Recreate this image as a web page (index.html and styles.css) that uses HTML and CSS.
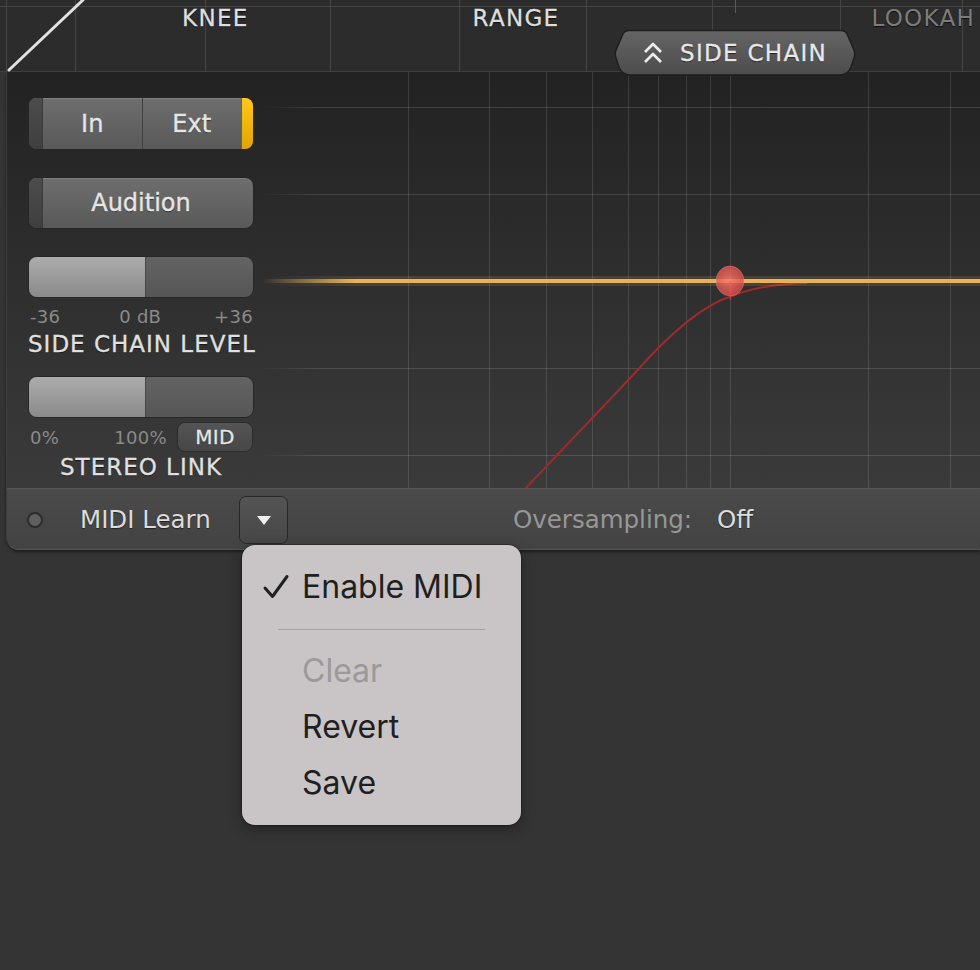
FILE: index.html
```html
<!DOCTYPE html>
<html>
<head>
<meta charset="UTF-8">
<title>Side Chain</title>
<link rel="stylesheet" href="styles.css">
</head>
<body>
	<div class="top">
		<svg class="top_grid" width="980" height="72">
			<line x1="0" y1="6.5" x2="980" y2="6.5" />
			<line x1="6.5" y1="0" x2="6.5" y2="72" />
			<line x1="75.5" y1="0" x2="75.5" y2="72" />
			<line x1="205.5" y1="0" x2="205.5" y2="72" />
			<line x1="330.5" y1="0" x2="330.5" y2="72" />
			<line x1="459.5" y1="0" x2="459.5" y2="72" />
			<line x1="586.5" y1="0" x2="586.5" y2="72" />
			<line x1="712.5" y1="0" x2="712.5" y2="72" />
			<line x1="840.5" y1="0" x2="840.5" y2="72" />
			<line x1="962.5" y1="0" x2="962.5" y2="72" />
			<line class="tick" x1="735.5" y1="0" x2="735.5" y2="13" />
			<line class="diag" x1="9" y1="70" x2="83" y2="0" />
		</svg>
		<div class="labels">
			<span class="lbl knee">KNEE</span>
			<span class="lbl range">RANGE</span>
			<span class="lbl dim">LOOKAH</span>
		</div>
		<div class="sc_tab">
			<svg class="tab_shape" width="242" height="48">
				<defs>
					<linearGradient id="tabg" x1="0" y1="0" x2="0" y2="1">
						<stop offset="0" stop-color="#656565" />
						<stop offset="1" stop-color="#4c4c4c" />
					</linearGradient>
				</defs>
				<path d="M15,1.5 H227 Q231,1.5 233,5 L240,21 Q241.5,24.5 240,29 L237,38 Q234,46 226,46 H16 Q8,46 5,38 L2,29 Q0.5,24.5 2,21 L9,5 Q11,1.5 15,1.5 Z" fill="url(#tabg)" stroke="#1e1e1e" stroke-width="1.5" />
			</svg>
			<svg class="chev" width="22" height="24" viewBox="0 0 22 24">
				<polyline points="3,11 11,3 19,11" />
				<polyline points="3,21 11,13 19,21" />
			</svg>
			<span class="tab_text">SIDE CHAIN</span>
		</div>
	</div>

	<div class="panel">
		<div class="main">
			<div class="controls">
				<div class="btn seg">
					<span class="cap"></span>
					<span class="part sep">In</span>
					<span class="part">Ext</span>
					<span class="led_on"></span>
				</div>
				<div class="btn audition">
					<span class="cap"></span>
					<span class="part">Audition</span>
				</div>
				<div class="slider">
					<span class="fill" style="width: 117px"></span>
				</div>
				<div class="scale">
					<span>-36</span>
					<span class="mid">0 dB</span>
					<span>+36</span>
				</div>
				<div class="title">SIDE CHAIN LEVEL</div>
				<div class="slider second">
					<span class="fill" style="width: 117px"></span>
				</div>
				<div class="scale link">
					<span>0%</span>
					<span class="pct">100%</span>
					<span class="mid_btn">MID</span>
				</div>
				<div class="title small">STEREO LINK</div>
			</div>
			<svg class="graph" width="718" height="416">
				<defs>
					<linearGradient id="hfade" gradientUnits="userSpaceOnUse" x1="0" y1="0" x2="718" y2="0">
						<stop offset="0" stop-color="#ffffff" stop-opacity="0" />
						<stop offset="0.08" stop-color="#ffffff" stop-opacity="0.13" />
						<stop offset="1" stop-color="#ffffff" stop-opacity="0.13" />
					</linearGradient>
					<linearGradient id="ofade" gradientUnits="userSpaceOnUse" x1="0" y1="0" x2="718" y2="0">
						<stop offset="0" stop-color="#e8b25c" stop-opacity="0" />
						<stop offset="0.13" stop-color="#e8b25c" stop-opacity="1" />
						<stop offset="1" stop-color="#e8b25c" stop-opacity="1" />
					</linearGradient>
					<radialGradient id="dotg" cx="0.45" cy="0.45" r="0.6">
						<stop offset="0" stop-color="#ff7a6a" />
						<stop offset="1" stop-color="#d84848" />
					</radialGradient>
				</defs>
				<g class="vgrid">
					<line x1="146.5" y1="0" x2="146.5" y2="416" />
					<line x1="227.5" y1="0" x2="227.5" y2="416" />
					<line x1="284.5" y1="0" x2="284.5" y2="416" />
					<line x1="330.5" y1="0" x2="330.5" y2="416" />
					<line x1="366.5" y1="0" x2="366.5" y2="416" />
					<line x1="396.5" y1="0" x2="396.5" y2="416" />
					<line x1="424.5" y1="0" x2="424.5" y2="416" />
					<line x1="448.5" y1="0" x2="448.5" y2="416" />
					<line x1="468.5" y1="0" x2="468.5" y2="416" />
					<line x1="606.5" y1="0" x2="606.5" y2="416" />
					<line x1="688.5" y1="0" x2="688.5" y2="416" />
				</g>
				<g class="hgrid" stroke="url(#hfade)">
					<line x1="0" y1="35.5" x2="718" y2="35.5" />
					<line x1="0" y1="122.5" x2="718" y2="122.5" />
					<line x1="0" y1="296.5" x2="718" y2="296.5" />
					<line x1="0" y1="383.5" x2="718" y2="383.5" />
				</g>
				<path class="curve" d="M262,418 L372,302 Q430,236 470,224 Q500,212 545,211" />
				<line class="glow" x1="0" y1="209" x2="718" y2="209" stroke="url(#ofade)" />
				<line class="thr" x1="0" y1="209" x2="718" y2="209" stroke="url(#ofade)" />
				<line class="dot_stem" x1="468.5" y1="209" x2="468.5" y2="228" />
				<ellipse class="dot" cx="468" cy="209" rx="14" ry="15" fill="url(#dotg)" />
			</svg>
		</div>
		<div class="bar">
			<span class="led"></span>
			<span class="learn">MIDI Learn</span>
			<span class="drop">
				<svg width="16" height="12" viewBox="0 0 16 12"><polygon points="1,2 15,2 8,11" /></svg>
			</span>
			<span class="os">Oversampling:</span>
			<span class="os_val">Off</span>
		</div>
	</div>

	<div class="menu">
		<div class="item">
			<svg class="check" width="28" height="26" viewBox="0 0 28 26"><path d="M3,14 L10.5,22.5 L25,2.5" /></svg>
			Enable MIDI
		</div>
		<div class="menu_sep"></div>
		<div class="item off">Clear</div>
		<div class="item">Revert</div>
		<div class="item">Save</div>
	</div>
</body>
</html>
```

FILE: styles.css
```css
* {
	box-sizing: border-box;
}

body {
	margin: 0;
	width: 980px;
	height: 970px;
	overflow: hidden;
	position: relative;
	background: #343434;
	font-family: "DejaVu Sans", "Liberation Sans", sans-serif;
}

/* knob strip */
.top {
	position: relative;
	height: 72px;
	background: #2c2c2c;
	border-bottom: 1px solid #3e3e3e;
}

.top_grid {
	position: absolute;
	left: 0;
	top: 0;
}

.top_grid line {
	stroke: #454545;
	stroke-width: 1;
}

.top_grid .tick {
	stroke: #5a5a5a;
}

.top_grid .diag {
	stroke: #e2e2e2;
	stroke-width: 3;
	stroke-linecap: round;
}

.labels {
	position: relative;
	display: flex;
	padding-top: 4px;
	height: 30px;
}

.lbl {
	font-size: 23px;
	line-height: 28px;
	letter-spacing: 1.3px;
	color: #dedede;
	-webkit-text-stroke: 0.3px #dedede;
	text-shadow: 0 1px 1px rgba(0, 0, 0, 0.7);
}

.knee {
	margin-left: 182px;
}

.range {
	margin-left: 224px;
}

.dim {
	margin-left: 312px;
	color: #7c7c7c;
	-webkit-text-stroke: 0;
	white-space: nowrap;
}

.sc_tab {
	position: absolute;
	left: 614px;
	top: 29px;
	width: 242px;
	height: 48px;
	display: flex;
	align-items: center;
	padding-left: 28px;
	z-index: 2;
}

.tab_shape {
	position: absolute;
	left: 0;
	top: 0;
}

.chev {
	position: relative;
	margin-right: 16px;
}

.chev polyline {
	fill: none;
	stroke: #ececec;
	stroke-width: 2.6;
	stroke-linejoin: round;
}

.tab_text {
	position: relative;
	font-size: 23px;
	letter-spacing: 1.3px;
	color: #e8e8e8;
	-webkit-text-stroke: 0.3px #e8e8e8;
	text-shadow: 0 1px 1px rgba(0, 0, 0, 0.6);
}

/* main panel */
.panel {
	margin-left: 6px;
	height: 478px;
	border-left: 1px solid #3e3e3e;
	border-bottom: 1px solid #555;
	border-bottom-left-radius: 13px;
	background: linear-gradient(#222, #3e3e3e);
	box-shadow: 0 2px 3px rgba(0, 0, 0, 0.45);
	overflow: hidden;
}

.main {
	display: flex;
	height: 416px;
}

.controls {
	width: 255px;
	flex: none;
	padding: 25px 0 0 21px;
	display: flex;
	flex-direction: column;
}

.btn {
	display: flex;
	width: 226px;
	border: 1px solid #262626;
	border-radius: 9px;
	overflow: hidden;
	background: linear-gradient(#6e6e6e, #595959);
	box-shadow: inset 0 1px 0 rgba(255, 255, 255, 0.12);
}

.seg {
	height: 53px;
}

.audition {
	height: 52px;
	margin-top: 27px;
}

.audition .part {
	padding-right: 14px;
}

.cap {
	width: 14px;
	flex: none;
	background: linear-gradient(#4c4c4c, #3f3f3f);
	border-right: 1px solid #3a3a3a;
}

.part {
	flex: 1;
	display: flex;
	align-items: center;
	justify-content: center;
	font-size: 24px;
	color: #e6e6e6;
	-webkit-text-stroke: 0.4px #e6e6e6;
	text-shadow: 0 1px 1px rgba(0, 0, 0, 0.55);
}

.sep {
	border-right: 1px solid #404040;
}

.led_on {
	width: 12px;
	flex: none;
	background: linear-gradient(#ffc81a, #e0a400);
	border-left: 1px solid #7a6320;
}

.slider {
	display: flex;
	width: 226px;
	height: 42px;
	margin-top: 27px;
	border: 1px solid #272727;
	border-radius: 9px;
	overflow: hidden;
	background: linear-gradient(#636363, #565656);
}

.slider.second {
	margin-top: 16px;
}

.fill {
	display: block;
	height: 100%;
	background: linear-gradient(#acacac, #8a8a8a);
	border-right: 1px solid #474747;
}

.scale {
	display: flex;
	justify-content: space-between;
	align-items: center;
	width: 226px;
	height: 24px;
	margin-top: 6px;
	padding: 0 1px 0 2px;
	font-size: 18px;
	letter-spacing: 0.3px;
	color: #8a8a8a;
}

.scale .mid {
	margin-left: 6px;
}

.link {
	height: 30px;
	margin-top: 4px;
	justify-content: flex-start;
}

.link .pct {
	margin-left: 55px;
}

.mid_btn {
	margin-left: auto;
	width: 76px;
	height: 30px;
	border-radius: 8px;
	border: 1px solid #2c2c2c;
	background: linear-gradient(#545454, #474747);
	color: #e6e6e6;
	font-size: 20px;
	line-height: 28px;
	text-align: center;
	-webkit-text-stroke: 0.3px #e6e6e6;
	text-shadow: 0 1px 1px rgba(0, 0, 0, 0.5);
}

.title {
	width: 226px;
	height: 32px;
	line-height: 32px;
	text-align: center;
	font-size: 23px;
	letter-spacing: 1px;
	color: #e0e0e0;
	white-space: nowrap;
	-webkit-text-stroke: 0.3px #e0e0e0;
	text-shadow: 0 1px 1px rgba(0, 0, 0, 0.6);
}

.title.small {
	height: 30px;
	line-height: 30px;
}

/* graph */
.graph {
	flex: none;
	display: block;
}

.vgrid line {
	stroke: rgba(255, 255, 255, 0.12);
	stroke-width: 1;
}

.hgrid line {
	stroke-width: 1;
}

.curve {
	fill: none;
	stroke: #a02a2a;
	stroke-width: 2;
}

.glow {
	stroke-width: 10;
	opacity: 0.15;
}

.thr {
	stroke-width: 4;
}

.dot_stem {
	stroke: #c23434;
	stroke-width: 1.5;
}

.dot {
	opacity: 0.8;
	stroke: rgba(255, 190, 180, 0.35);
	stroke-width: 1;
}

/* bottom bar */
.bar {
	display: flex;
	align-items: center;
	height: 62px;
	padding-left: 20px;
	border-top: 1px solid #565656;
	background: linear-gradient(#4a4a4a, #434343);
	font-size: 24.5px;
	color: #dcdcdc;
}

.led {
	width: 16px;
	height: 16px;
	margin-right: 37px;
	border-radius: 50%;
	border: 2px solid #2c2c2c;
	background: #5f5f5f;
}

.learn {
	width: 159px;
	text-shadow: 0 1px 1px rgba(0, 0, 0, 0.5);
}

.drop {
	display: flex;
	align-items: center;
	justify-content: center;
	width: 49px;
	height: 48px;
	border-radius: 7px;
	border: 1px solid #282828;
	background: linear-gradient(#545454, #474747);
}

.drop polygon {
	fill: #f0f0f0;
}

.os {
	margin-left: 225px;
	width: 204px;
	color: #979797;
}

.os_val {
	text-shadow: 0 1px 1px rgba(0, 0, 0, 0.5);
}

/* midi menu */
.menu {
	position: absolute;
	left: 242px;
	top: 545px;
	width: 279px;
	padding: 14px 0;
	border-radius: 13px;
	background: #c9c5c7;
	box-shadow: 0 4px 14px rgba(0, 0, 0, 0.35), 0 0 0 1px rgba(0, 0, 0, 0.25);
	font-family: Inter, "Liberation Sans", sans-serif;
	font-size: 32px;
	color: #1f1f1f;
}

.item {
	position: relative;
	height: 56px;
	line-height: 56px;
	padding-left: 60px;
}

.item.off {
	color: #9b999a;
}

.check {
	position: absolute;
	left: 20px;
	top: 15px;
}

.check path {
	fill: none;
	stroke: #1f1f1f;
	stroke-width: 3;
	stroke-linecap: round;
	stroke-linejoin: round;
}

.menu_sep {
	height: 28px;
	margin: 0 36px;
	border-bottom: 1px solid #a4a1a3;
	transform: translateY(-13px);
}
```
